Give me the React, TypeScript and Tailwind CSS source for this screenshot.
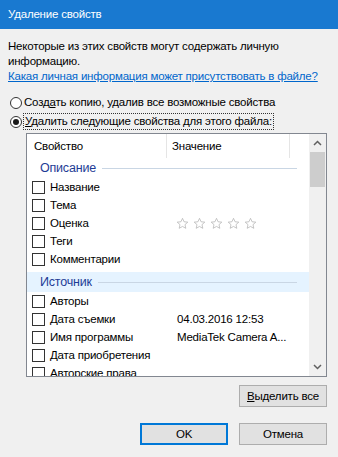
import React from 'react';

const font = { fontFamily: '"Liberation Sans", Arial, sans-serif' };

const Star: React.FC = () => (
  <svg width="13" height="13" viewBox="0 0 24 24" className="shrink-0">
    <path
      d="M12 2.5l2.9 6.3 6.9.7-5.2 4.6 1.5 6.8L12 17.4l-6.1 3.5 1.5-6.8-5.2-4.6 6.9-.7z"
      fill="none"
      stroke="#b4b4b4"
      strokeWidth="1.4"
      strokeLinejoin="round"
    />
  </svg>
);

const Row: React.FC<{ label: string; value?: React.ReactNode }> = ({ label, value }) => (
  <div className="flex items-center h-[18px] shrink-0">
    <div className="w-[13px] h-[13px] border border-[#333] bg-white ml-[5px] shrink-0" />
    <div className="ml-[5px] w-[122px] whitespace-nowrap">{label}</div>
    <div className="ml-[5px] whitespace-nowrap flex items-center">{value}</div>
  </div>
);

const Group: React.FC<{ title: string; hl?: boolean }> = ({ title, hl }) => (
  <div className={`flex items-center h-[20px] shrink-0 pl-[13px] pr-[12px] ${hl ? 'bg-[#e5f3ff]' : ''}`}>
    <span className="text-[#1e3c96] text-[12.5px] whitespace-nowrap">{title}</span>
    <div className="flex-1 h-px bg-[#c9d6e4] ml-[6px]" />
  </div>
);

const Chevron: React.FC<{ down?: boolean }> = ({ down }) => (
  <svg width="9" height="6" viewBox="0 0 9 6" className={down ? 'rotate-180' : ''}>
    <path d="M1 5l3.5-3.5L8 5" fill="none" stroke="#606060" strokeWidth="1.5" />
  </svg>
);

export default function App() {
  return (
    <div
      className="w-[338px] h-[457px] bg-[#f0f0f0] text-[11.5px] tracking-[-0.2px] text-black overflow-hidden"
      style={font}
    >
      <div className="h-[29px] bg-[#1979d0] text-white flex items-center pl-[8px]">Удаление свойств</div>
      <div className="px-[8px] pt-[10px] leading-[15px]">
        <div>Некоторые из этих свойств могут содержать личную</div>
        <div>информацию.</div>
        <div className="text-[#0066cc] underline whitespace-nowrap">
          Какая личная информация может присутствовать в файле?
        </div>

        <div className="mt-[9px] flex items-center h-[19px]">
          <div className="w-[12px] h-[12px] rounded-full border border-[#333] bg-white ml-[2px]" />
          <span className="ml-[2px]">
            Созд<span className="underline">а</span>ть копию, удалив все возможные свойства
          </span>
        </div>
        <div className="flex items-center h-[19px]">
          <div className="w-[12px] h-[12px] rounded-full border border-[#333] bg-white ml-[2px] flex items-center justify-center">
            <div className="w-[6px] h-[6px] rounded-full bg-[#1a1a1a]" />
          </div>
          <span className="ml-[1px] border border-dotted border-[#333] px-[1px] leading-[15px]">
            <span className="underline">У</span>далить следующие свойства для этого файла:
          </span>
        </div>

        <div className="mt-[2px] ml-[18px] w-[301px] h-[244px] border border-[#828790] bg-white flex overflow-hidden">
          <div className="flex-1 flex flex-col overflow-hidden">
            <div className="h-[24px] flex shrink-0">
              <div className="w-[140px] pl-[7px] flex items-center border-r border-[#e5e5e5]">Свойство</div>
              <div className="w-[123px] pl-[5px] flex items-center border-r border-[#e5e5e5]">Значение</div>
            </div>
            <Group title="Описание" />
            <Row label="Название" />
            <Row label="Тема" />
            <Row
              label="Оценка"
              value={
                <span className="flex gap-[4px] -ml-[1px]">
                  <Star />
                  <Star />
                  <Star />
                  <Star />
                  <Star />
                </span>
              }
            />
            <Row label="Теги" />
            <Row label="Комментарии" />
            <div className="h-[4px] shrink-0" />
            <Group title="Источник" hl />
            <Row label="Авторы" />
            <Row label="Дата съемки" value="04.03.2016 12:53" />
            <Row label="Имя программы" value="MediaTek Camera A..." />
            <Row label="Дата приобретения" />
            <Row label="Авторские права" />
          </div>
          <div className="w-[17px] bg-[#f0f0f0] flex flex-col items-center shrink-0">
            <div className="h-[18px] flex items-center justify-center">
              <Chevron />
            </div>
            <div className="w-[15px] h-[35px] bg-[#cdcdcd]" />
            <div className="flex-1" />
            <div className="h-[18px] flex items-center justify-center">
              <Chevron down />
            </div>
          </div>
        </div>

        <div className="flex justify-end mt-[8px] pr-[3px]">
          <div className="w-[88px] h-[22px] bg-[#e1e1e1] border border-[#adadad] flex items-center justify-center">
            <span>
              <span className="underline">В</span>ыделить все
            </span>
          </div>
        </div>
        <div className="flex justify-end gap-[11px] mt-[16px] pr-[3px]">
          <div className="w-[88px] h-[22px] bg-[#e1e1e1] border-2 border-[#0078d7] flex items-center justify-center">
            OK
          </div>
          <div className="w-[88px] h-[22px] bg-[#e1e1e1] border border-[#adadad] flex items-center justify-center">
            Отмена
          </div>
        </div>
      </div>
    </div>
  );
}
